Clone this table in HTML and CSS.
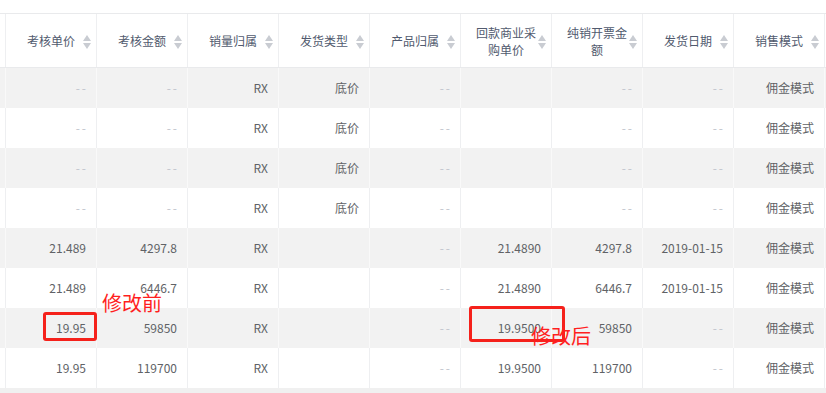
FILE: index.html
```html
<!DOCTYPE html>
<html lang="zh-CN">
<head>
<meta charset="utf-8">
<title>表格</title>
<link rel="stylesheet" href="styles.css">
</head>
<body>
<div class="page">
  <div class="grid head">
    <div class="th edge"></div>
    <div class="th"><span>考核单价</span><svg class="sort" viewBox="0 0 8 14"><polygon points="0,6 4,0 8,6"/><polygon points="0,8 8,8 4,14"/></svg></div>
    <div class="th"><span>考核金额</span><svg class="sort" viewBox="0 0 8 14"><polygon points="0,6 4,0 8,6"/><polygon points="0,8 8,8 4,14"/></svg></div>
    <div class="th"><span>销量归属</span><svg class="sort" viewBox="0 0 8 14"><polygon points="0,6 4,0 8,6"/><polygon points="0,8 8,8 4,14"/></svg></div>
    <div class="th"><span>发货类型</span><svg class="sort" viewBox="0 0 8 14"><polygon points="0,6 4,0 8,6"/><polygon points="0,8 8,8 4,14"/></svg></div>
    <div class="th"><span>产品归属</span><svg class="sort" viewBox="0 0 8 14"><polygon points="0,6 4,0 8,6"/><polygon points="0,8 8,8 4,14"/></svg></div>
    <div class="th"><span>回款商业采购单价</span><svg class="sort" viewBox="0 0 8 14"><polygon points="0,6 4,0 8,6"/><polygon points="0,8 8,8 4,14"/></svg></div>
    <div class="th"><span>纯销开票金额</span><svg class="sort" viewBox="0 0 8 14"><polygon points="0,6 4,0 8,6"/><polygon points="0,8 8,8 4,14"/></svg></div>
    <div class="th"><span>发货日期</span><svg class="sort" viewBox="0 0 8 14"><polygon points="0,6 4,0 8,6"/><polygon points="0,8 8,8 4,14"/></svg></div>
    <div class="th"><span>销售模式</span><svg class="sort" viewBox="0 0 8 14"><polygon points="0,6 4,0 8,6"/><polygon points="0,8 8,8 4,14"/></svg></div>
  </div>

  <div class="grid row stripe">
    <div class="td edge"></div><div class="td nil">--</div><div class="td nil">--</div><div class="td">RX</div><div class="td">底价</div><div class="td nil">--</div><div class="td"></div><div class="td nil">--</div><div class="td nil">--</div><div class="td">佣金模式</div>
  </div>
  <div class="grid row">
    <div class="td edge"></div><div class="td nil">--</div><div class="td nil">--</div><div class="td">RX</div><div class="td">底价</div><div class="td nil">--</div><div class="td"></div><div class="td nil">--</div><div class="td nil">--</div><div class="td">佣金模式</div>
  </div>
  <div class="grid row stripe">
    <div class="td edge"></div><div class="td nil">--</div><div class="td nil">--</div><div class="td">RX</div><div class="td">底价</div><div class="td nil">--</div><div class="td"></div><div class="td nil">--</div><div class="td nil">--</div><div class="td">佣金模式</div>
  </div>
  <div class="grid row">
    <div class="td edge"></div><div class="td nil">--</div><div class="td nil">--</div><div class="td">RX</div><div class="td">底价</div><div class="td nil">--</div><div class="td"></div><div class="td nil">--</div><div class="td nil">--</div><div class="td">佣金模式</div>
  </div>
  <div class="grid row stripe">
    <div class="td edge"></div><div class="td">21.489</div><div class="td">4297.8</div><div class="td">RX</div><div class="td"></div><div class="td nil">--</div><div class="td">21.4890</div><div class="td">4297.8</div><div class="td">2019-01-15</div><div class="td">佣金模式</div>
  </div>
  <div class="grid row">
    <div class="td edge"></div><div class="td">21.489</div><div class="td">6446.7</div><div class="td">RX</div><div class="td"></div><div class="td nil">--</div><div class="td">21.4890</div><div class="td">6446.7</div><div class="td">2019-01-15</div><div class="td">佣金模式</div>
  </div>
  <div class="grid row stripe">
    <div class="td edge"></div><div class="td">19.95</div><div class="td">59850</div><div class="td">RX</div><div class="td"></div><div class="td nil">--</div><div class="td">19.9500</div><div class="td">59850</div><div class="td nil">--</div><div class="td">佣金模式</div>
  </div>
  <div class="grid row">
    <div class="td edge"></div><div class="td">19.95</div><div class="td">119700</div><div class="td">RX</div><div class="td"></div><div class="td nil">--</div><div class="td">19.9500</div><div class="td">119700</div><div class="td nil">--</div><div class="td">佣金模式</div>
  </div>
  <div class="foot"></div>

  <div class="mark mark-a"></div>
  <div class="note note-a">修改前</div>
  <div class="mark mark-b"></div>
  <div class="note note-b">修改后</div>
</div>
</body>
</html>
```

FILE: styles.css
```css
html, body {
  margin: 0;
  padding: 0;
  background: #fff;
  overflow: hidden;
}
body {
  width: 826px;
  height: 393px;
  font-family: "Noto Sans CJK SC", "Noto Sans", sans-serif;
  font-size: 12px;
  color: #606266;
}
.page {
  position: relative;
  padding-top: 13px;
  height: 380px;
}
.grid {
  display: grid;
  grid-template-columns: 6px repeat(9, 91px) 1px;
}
.head {
  border-top: 1px solid #e9eaec;
  border-bottom: 1px solid #e9eaec;
  background: #fff;
}
.th {
  position: relative;
  box-sizing: border-box;
  height: 53px;
  border-right: 1px solid #eeeff1;
  padding: 0 14px;
  display: flex;
  align-items: center;
  justify-content: center;
  text-align: center;
  line-height: 17px;
  color: #515a6e;
}
.th.edge { padding: 0; }
.sort {
  position: absolute;
  right: 5px;
  top: 50%;
  width: 8px;
  height: 14px;
  margin-top: -6px;
  fill: #c9ccd2;
}
.row .td {
  box-sizing: border-box;
  height: 40px;
  line-height: 40px;
  padding-right: 10px;
  text-align: right;
  border-right: 1px solid #eeeff1;
  white-space: nowrap;
}
.row .td.edge { padding: 0; }
.row.stripe { background: #f2f2f2; }
.row.stripe .td { border-right-color: #f9f9f9; }
.row .td.nil {
  color: #c0c4cc;
  letter-spacing: 2px;
  padding-right: 8px;
}
.foot {
  height: 5px;
  background: #f0f0f0;
}
.mark {
  position: absolute;
  box-sizing: border-box;
  border: 3px solid #f5211b;
  border-radius: 3px;
}
.mark-a {
  left: 43px;
  top: 312px;
  width: 54px;
  height: 29px;
}
.mark-b {
  left: 469px;
  top: 306px;
  width: 96px;
  height: 36px;
}
.note {
  position: absolute;
  font-size: 20px;
  line-height: 20px;
  color: #ff1f1f;
  white-space: nowrap;
}
.note-a { left: 102px; top: 293px; }
.note-b { left: 531px; top: 326px; }
```
